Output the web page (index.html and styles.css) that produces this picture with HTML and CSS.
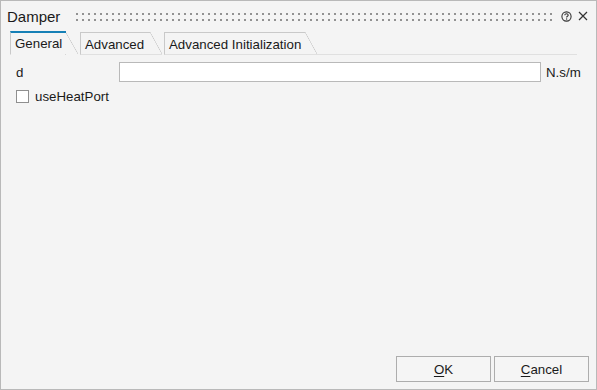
FILE: index.html
```html
<!DOCTYPE html>
<html>
<head>
<meta charset="utf-8">
<link rel="stylesheet" href="styles.css">
</head>
<body>
<div class="window">
  <div class="titlebar">
    <span class="title">Damper</span>
    <span class="grip"></span>
    <svg class="icon-help" width="11" height="11" viewBox="0 0 11 11">
      <circle cx="5.5" cy="5.5" r="4.6" fill="none" stroke="#333" stroke-width="1.1"/>
      <path d="M3.8 4.3 C3.8 3.3 4.6 2.8 5.5 2.8 C6.4 2.8 7.2 3.3 7.2 4.2 C7.2 5.2 5.6 5.3 5.6 6.4" fill="none" stroke="#333" stroke-width="1.1"/>
      <rect x="5" y="7.4" width="1.2" height="1.2" fill="#333"/>
    </svg>
    <svg class="icon-close" width="10" height="10" viewBox="0 0 10 10">
      <path d="M1 1 L9 9 M9 1 L1 9" stroke="#333" stroke-width="1.2"/>
    </svg>
  </div>
  <div class="tabs">
    <div class="tab active tab-general"><span class="tab-label">General</span><span class="slant"></span></div>
    <div class="tab tab-advanced"><span class="tab-label">Advanced</span><span class="slant"></span></div>
    <div class="tab tab-init"><span class="tab-label">Advanced Initialization</span><span class="slant"></span></div>
    <div class="tabs-fill"></div>
  </div>
  <div class="form">
    <div class="row">
      <label class="param-label">d</label>
      <input class="param-input" type="text">
      <span class="unit">N.s/m</span>
    </div>
    <div class="row check-row">
      <span class="checkbox"></span>
      <span class="check-label">useHeatPort</span>
    </div>
  </div>
  <div class="footer">
    <button class="btn"><u>O</u>K</button>
    <button class="btn"><u>C</u>ancel</button>
  </div>
</div>
</body>
</html>
```
FILE: styles.css
```css
html, body {
  margin: 0;
  padding: 0;
}
body {
  font-family: "Liberation Sans", Arial, sans-serif;
  font-size: 13.3px;
  color: #1a1a1a;
}
.window {
  width: 597px;
  height: 390px;
  box-sizing: border-box;
  border: 1px solid #b9b9b9;
  background: #f4f4f4;
  display: flex;
  flex-direction: column;
}
.titlebar {
  height: 29px;
  display: flex;
  align-items: center;
  padding: 0 8px 0 6px;
  box-sizing: border-box;
}
.title {
  font-size: 15px;
  margin-top: 1px;
}
.grip {
  flex: 1;
  height: 8px;
  margin: 2px 8px 0 16px;
  background-image:
    linear-gradient(90deg, transparent 2px, #f4f4f4 2px),
    linear-gradient(#929292 2px, transparent 2px);
  background-size: 6px 6px, 6px 6px;
}
.icon-help {
  margin-top: 1px;
  margin-right: 6px;
}
.icon-close {
  margin-top: 1px;
}
.tabs {
  display: flex;
  height: 24px;
  margin: 1px 19px 0 9px;
}
.tab {
  display: flex;
  margin-right: 2px;
}
.tab-label {
  display: flex;
  align-items: center;
  box-sizing: border-box;
  padding: 1px 0 0 4px;
  border-left: 1px solid #c9c9c9;
  border-top: 1px solid #c9c9c9;
  border-bottom: 1px solid #e0e0e0;
  margin-top: 1px;
}
.slant {
  width: 12px;
  margin-top: 1px;
  border-bottom: 1px solid #e0e0e0;
  background: linear-gradient(to top right, transparent calc(50% - 0.6px), #c9c9c9 50%, transparent calc(50% + 0.6px));
}
.tab.active .tab-label {
  margin-top: 0;
  border-top: 2px solid #1680b6;
  border-bottom: 1px solid transparent;
  padding-top: 0;
}
.tab.active .slant {
  margin-top: 0;
  width: 13px;
  border-bottom: 1px solid transparent;
  background:
    linear-gradient(#1680b6, #1680b6) 0 0 / 1px 2px no-repeat,
    linear-gradient(to top right, transparent calc(50% - 0.6px), #c9c9c9 50%, transparent calc(50% + 0.6px));
}
.tab-general .tab-label { width: 55px; }
.tab-advanced .tab-label { width: 70px; }
.tab-init .tab-label { width: 141px; }
.tabs-fill {
  flex: 1;
  border-bottom: 1px solid #e0e0e0;
  margin-left: -2px;
}
.form {
  padding: 7px 16px 0 15px;
}
.row {
  display: flex;
  align-items: center;
}
.param-label {
  width: 103px;
}
.param-input {
  flex: 1;
  height: 20px;
  box-sizing: border-box;
  border: 1px solid #b9b9b9;
  background: #fff;
  margin: 0;
  padding: 0 3px;
  font: inherit;
  outline: none;
}
.unit {
  margin-left: 5px;
  width: 34px;
}
.check-row {
  margin-top: 7px;
}
.checkbox {
  width: 13px;
  height: 13px;
  box-sizing: border-box;
  border: 1px solid #8f8f8f;
  background: #fff;
}
.check-label {
  margin-left: 6px;
}
.footer {
  margin-top: auto;
  display: flex;
  justify-content: flex-end;
  gap: 3px;
  padding: 0 7px 7px 0;
}
.btn {
  width: 95px;
  height: 26px;
  box-sizing: border-box;
  border: 1px solid #adadad;
  border-radius: 0;
  background: #f5f5f5;
  font: inherit;
  color: #1a1a1a;
  padding: 0;
}
.btn u {
  text-decoration-thickness: 1px;
  text-underline-offset: 2px;
}
```
